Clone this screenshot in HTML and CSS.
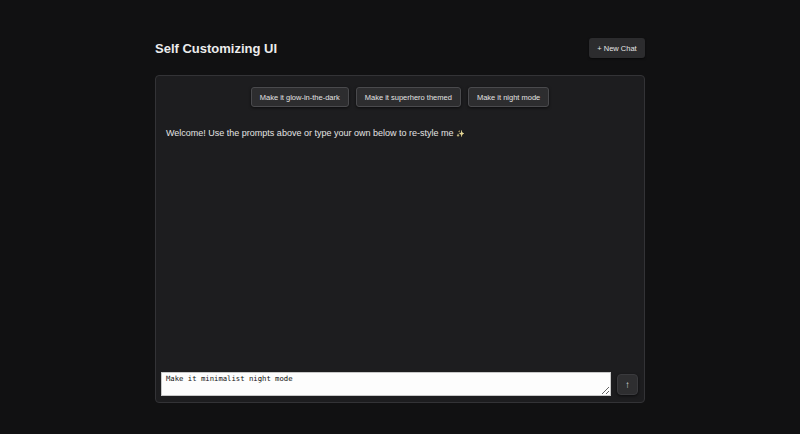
FILE: index.html
```html
<!DOCTYPE html>
<html>
<head>
<meta charset="utf-8">
<link rel="stylesheet" href="styles.css">
</head>
<body>
<div class="app">
  <header class="header">
    <h1 class="title">Self Customizing UI</h1>
    <button class="new-chat">+ New Chat</button>
  </header>
  <main class="panel">
    <div class="prompts">
      <button class="prompt">Make it glow-in-the-dark</button>
      <button class="prompt">Make it superhero themed</button>
      <button class="prompt">Make it night mode</button>
    </div>
    <div class="messages">
      <p class="welcome">Welcome! Use the prompts above or type your own below to re-style me <span class="sparkle">✨</span></p>
    </div>
    <div class="composer">
      <textarea class="input">Make it minimalist night mode</textarea>
      <button class="send">↑</button>
    </div>
  </main>
</div>
</body>
</html>
```
FILE: styles.css
```css
* { box-sizing: border-box; }
html, body { margin: 0; padding: 0; }
body {
  background: #111112;
  font-family: "Liberation Sans", Arial, sans-serif;
  color: #e8e8e8;
  height: 434px;
  overflow: hidden;
}
.app {
  width: 490px;
  margin: 0 auto;
  padding-top: 38px;
}
.header {
  display: flex;
  justify-content: space-between;
  align-items: center;
  height: 20px;
}
.title {
  margin: 0;
  font-size: 13px;
  font-weight: bold;
  color: #ececec;
}
.new-chat {
  height: 20px;
  width: 56px;
  padding: 0;
  background: #2c2c2e;
  color: #e6e6e6;
  border: none;
  border-radius: 3px;
  font-family: "Liberation Sans", Arial, sans-serif;
  font-size: 7.5px;
  box-shadow: 0 1px 2px rgba(0,0,0,0.5);
}
.panel {
  margin-top: 17px;
  height: 328px;
  background: #1d1d1f;
  border: 1px solid #333336;
  border-radius: 4px;
  display: flex;
  flex-direction: column;
  padding: 11px 5px 6px 5px;
}
.prompts {
  display: flex;
  justify-content: center;
  gap: 7px;
}
.prompt {
  height: 20px;
  padding: 0 8px;
  background: #2d2d2f;
  color: #e2e2e2;
  border: 1px solid #4a4a4d;
  border-radius: 3px;
  font-family: "Liberation Sans", Arial, sans-serif;
  font-size: 7.5px;
  box-shadow: 0 1px 3px rgba(0,0,0,0.6);
}
.messages {
  flex: 1;
  padding: 0 5px;
}
.welcome {
  margin: 21px 0 0 0;
  font-size: 9px;
  color: #e4e4e4;
}
.sparkle {
  font-size: 7px;
  filter: grayscale(0.6);
}
.composer {
  display: flex;
  align-items: center;
  gap: 6px;
}
.input {
  flex: 1;
  height: 24px;
  resize: vertical;
  border: 1px solid #c8c8c8;
  border-radius: 0;
  background: #fdfdfd;
  color: #111;
  font-family: "DejaVu Sans Mono", monospace;
  font-size: 7.25px;
  padding: 1px 4px;
  margin: 0;
}
.send {
  width: 21px;
  height: 21px;
  padding: 0;
  background: #2e2e30;
  color: #ddd;
  border: 1px solid #3a3a3d;
  border-radius: 4px;
  font-size: 10px;
  box-shadow: 0 1px 3px rgba(0,0,0,0.6);
  margin-right: 1px;
}
```
